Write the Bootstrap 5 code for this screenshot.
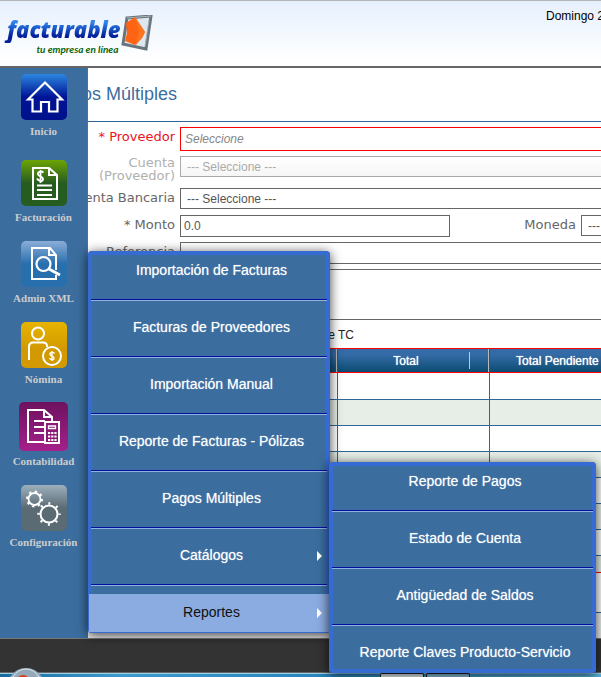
<!DOCTYPE html>
<html lang="es">
<head>
<meta charset="utf-8">
<meta name="viewport" content="width=device-width, initial-scale=1">
<title>Facturable - Pagos</title>
<link href="https://cdn.jsdelivr.net/npm/bootstrap@5.3.0/dist/css/bootstrap.min.css" rel="stylesheet">
<style>
  body { font-family: "Liberation Sans", Arial, sans-serif; font-size: 12px; line-height: 16px; color: #333; overflow: hidden; }
  .app-header { height: 67px; border-top: 1px solid #b4b4bc; border-bottom: 1px solid #666; background: linear-gradient(#e6f0fd, #fff 92%); }
  .brand { padding: 14px 0 0 4px; color: inherit; gap: 1px; }
  .brand-name { padding-left: 3px; font: italic 800 22px/28px "Open Sans", sans-serif; background: linear-gradient(#2f86ee 25%, #04209a 75%); -webkit-background-clip: text; background-clip: text; color: transparent; }
  .brand-tag { font: italic 700 10px/12px Lato, sans-serif; color: #0a650a; text-align: right; padding-right: 2px; }
  .today { width: 55px; padding-top: 7px; color: #000; }
  .app-side { width: 88px; background: #3b6e9f; border-top: 1px solid #666; border-right: 1px solid #55708a; padding-top: 6px; gap: 16px; }
  .app-side a { font: 700 11px/16px "Liberation Serif", serif; color: #ccc; gap: 3px; }
  .app-side .home { margin-bottom: 5px; }
  .app-side svg { width: 46px; height: 46px; }
  .app-side svg.wide { width: 49px; height: 49px; margin: -1px 0; }
  .app-main { min-width: 0; border-top: 1px solid #666; }
  .page-title { font-size: 18px; line-height: 53px; font-weight: 400; color: #3b6e9f; border-bottom: 1px solid #2f6599; }
  .page-title span { margin-left: -6px; }
  .form-area { padding-top: 5px; gap: 5px; }
  .form-line { gap: 5px; min-height: 22px; }
  .form-line label { font: 13px/14px "DejaVu Sans", Verdana, sans-serif; color: #666; text-align: right; padding-top: 3px; }
  .lab { width: 87px; display: flex; justify-content: flex-end; flex-shrink: 0; white-space: nowrap; overflow: hidden; }
  .lab-mid { width: 121px; }
  .form-line .req { color: #e8141c; }
  .form-line .off { color: #b0b0b0; padding-top: 0; line-height: 13px; height: 27px; }
  .fld { appearance: none; border: 1px solid #666; border-radius: 0; height: 21px; padding: 0 6px; background: #fff; color: #555; font-size: 12px; min-width: 0; }
  .fld.open { border-right: 0; }
  .fld.txt { height: 22px; padding: 0 3px; }
  .fld.prov { height: 24px; border-color: #f00; padding: 0 4px; font-style: italic; }
  .fld.prov::placeholder { color: #888; }
  .fld:disabled { border-color: #aaa; color: #aaa; opacity: 1; background: linear-gradient(#fff, #f6f6f6); }
  .fld.area { height: 51px; resize: none; }
  .fld.w-monto { width: 270px; flex-shrink: 0; }
  .fld.cur { padding-right: 0; }
  .tc { width: 266px; line-height: 30px; height: 28px; color: #222; }
  .pay-grid { table-layout: fixed; border-collapse: separate; border-spacing: 0; }
  .pay-grid .c1 { width: 250px; } .pay-grid .c2 { width: 152px; }
  .pay-grid th { height: 25px; border: 1px solid #f00; border-left: 0; background: linear-gradient(#346ba6 25%, #0b4c72) padding-box; color: #fff; font-weight: 400; padding: 0 15px 0 0; text-align: center; position: relative; white-space: nowrap; text-shadow: 0 0 1px #fff; }
  .pay-grid th.split { box-shadow: inset -1px 0 #b8b8b8; }
  .pay-grid th.split::after { content: ""; position: absolute; right: 19px; top: 3px; bottom: 3px; width: 1px; background: #b9cbdc; }
  .pay-grid th:last-child { padding: 0 0 0 26px; text-align: left; border-right: 0; }
  .pay-grid td { height: 26px; padding: 0; border-right: 1px solid #2f6599; border-bottom: 1px solid #2f6599; }
  .pay-grid td:last-child { border-right: 0; }
  .pay-grid tr:nth-child(even) td { background: #e7eee7; }
  .pay-grid tbody tr:first-child td { height: 27px; }
  .pay-grid tbody tr:last-child td { height: 17px; border-bottom-color: #f00; }
  .sum { height: 40px; border-bottom: 1px solid #2f6599; }
  .base { height: 25px; background: #eee; }
  .fly { position: absolute; z-index: 5; list-style: none; margin: 0; padding: 0; background: #3b6e9f; border: 1px solid #366bd2; border-radius: 3px; box-shadow: inset 0 0 0 3px #366bd2, 0 2px 12px rgba(0,0,0,.75); font-size: 14px; }
  .fly a { display: block; height: 38px; line-height: 36px; padding-left: 5px; color: #fff; text-align: center; text-decoration: none; position: relative; text-shadow: 0 0 1px rgba(255,255,255,.6); }
  .fly li + li::before { content: ""; display: block; height: 2px; margin: 9px 2px 8px; background: linear-gradient(#00109c 50%, #8fb2e0 50%); }
  .fly .sel { background: #8aace1; color: #111; text-shadow: none; }
  .fly .more::after { content: ""; position: absolute; right: 7px; top: 14px; border: solid transparent; border-width: 5px 0 5px 5px; border-left-color: #fff; }
  .fly-a { left: 88px; top: 184px; width: 242px; }
  .fly-b { left: 329px; top: 395px; width: 267px; }
  .app-foot { height: 35px; background: #333; border-top: 1px solid #777; border-bottom: 1px solid #666; }
  .dock { height: 4px; background: linear-gradient(#9cd0ea 25%, transparent 25%), linear-gradient(90deg, #176b9b, #3b9ccc 20%, #2584ba 55%, #58b5df); position: relative; padding-left: 380px; gap: 2px; }
  .dock span { width: 44px; border: 1px solid #222; border-bottom: 0; border-radius: 2px 2px 0 0; background: #e8f2f8; }
  .dock span + span { background: #8dc0dc; }
  .dock svg { position: absolute; left: 10px; bottom: 0; }
</style>
<script src="https://cdn.jsdelivr.net/npm/bootstrap@5.3.0/dist/js/bootstrap.bundle.min.js"></script>
</head>
<body>
<div class="d-flex flex-column min-vh-100">
  <header class="app-header d-flex justify-content-between">
    <a href="#" class="brand d-flex text-decoration-none">
      <div>
        <div class="brand-name">facturable</div>
        <div class="brand-tag">tu empresa en línea</div>
      </div>
      <svg width="34" height="38" viewBox="0 0 34 38" aria-hidden="true">
        <path d="M6 3 30 1 25 34 2 29Z" fill="#dde7ee" stroke="#69757c" stroke-width="3"/>
        <path d="M6 3 30 1M28 5 24 31" stroke="#aab5bb" fill="none"/>
        <path d="M5 8 14 2 24 17 21 23 14 30 4 26 6 18Z" fill="#ff6414"/>
        <path d="M14 2 24 17 21 23 15 30 18 17Z" fill="#ff741f"/>
      </svg>
    </a>
    <div class="today text-nowrap overflow-hidden">Domingo 2</div>
  </header>

  <div class="d-flex flex-grow-1 position-relative">
    <nav class="app-side d-flex flex-column flex-shrink-0" aria-label="Principal">
      <svg width="0" height="0" class="position-absolute" aria-hidden="true"><defs>
        <linearGradient id="gBlue" x2="0" y2="1"><stop stop-color="#2b86e0"/><stop offset=".5" stop-color="#001496"/><stop offset="1" stop-color="#00108a"/></linearGradient>
        <linearGradient id="gGreen" x2="0" y2="1"><stop stop-color="#6ca405"/><stop offset=".5" stop-color="#275c20"/></linearGradient>
        <linearGradient id="gSky" x2="0" y2="1"><stop stop-color="#8badd8"/><stop offset=".5" stop-color="#286fae"/></linearGradient>
        <linearGradient id="gGold" x2="0" y2="1"><stop stop-color="#e6b400"/><stop offset=".6" stop-color="#d29900"/></linearGradient>
        <linearGradient id="gPlum" x2="0" y2="1"><stop stop-color="#6d125f"/><stop offset="1" stop-color="#a5208a"/></linearGradient>
        <linearGradient id="gGray" x2="0" y2="1"><stop stop-color="#9cb0bd"/><stop offset=".5" stop-color="#5b6b74"/></linearGradient>
      </defs></svg>
      <a href="#" class="home d-flex flex-column align-items-center text-decoration-none">
        <svg viewBox="0 0 46 46"><rect width="46" height="46" rx="5" fill="url(#gBlue)"/><path d="M7 25.500 24 8.500 41 25.500H36.500V37.500H28V28H20V37.500H11.500V25.500Z" fill="none" stroke="#fff" stroke-width="2.200"/></svg>Inicio</a>
      <a href="#" class="d-flex flex-column align-items-center text-decoration-none">
        <svg viewBox="0 0 46 46"><rect width="46" height="46" rx="5" fill="url(#gGreen)"/><path d="M12 8H28L36 15V39H12ZM28 8V15H36M16 25.500H31M16 30H31M16 35H31" fill="none" stroke="#fff" stroke-width="2"/><path d="M22.500 12.500C20 10.500 16 12 17 14.500S22.500 16.500 22 19.500 17 20.500 16 18.500M19.500 10V23" fill="none" stroke="#fff" stroke-width="1.800"/></svg>Facturación</a>
      <a href="#" class="d-flex flex-column align-items-center text-decoration-none">
        <svg viewBox="0 0 46 46"><rect width="46" height="46" rx="5" fill="url(#gSky)"/><path d="M35 34V38H11V7H29L35 14V29M28 7V14H35" fill="none" stroke="#fff" stroke-width="2"/><circle cx="22.500" cy="23" r="7" fill="none" stroke="#fff" stroke-width="2.200"/><path d="M28 28 39 34" stroke="#fff" stroke-width="3"/></svg>Admin XML</a>
      <a href="#" class="d-flex flex-column align-items-center text-decoration-none">
        <svg viewBox="0 0 46 46"><rect width="46" height="46" rx="5" fill="url(#gGold)"/><g fill="none" stroke="#fff" stroke-width="2"><circle cx="17" cy="11.500" r="6"/><path d="M8 38V25Q8 20.500 12 20.500H22Q26 20.500 26 24V25"/><circle cx="31" cy="34" r="9"/></g><path d="M33.500 31.500C32 29.500 28.500 30.500 29 32.500S33.500 34 33 36.500 29 37.500 28.500 36M31 29V39" fill="none" stroke="#fff" stroke-width="1.300"/></svg>Nómina</a>
      <a href="#" class="d-flex flex-column align-items-center text-decoration-none">
        <svg class="wide" viewBox="0 0 49 49"><rect width="49" height="49" rx="5" fill="url(#gPlum)"/><path d="M25 40H9V8H25L33 15V19M25 8V15H33M15 19H26M15 25H26M15 31H26" fill="none" stroke="#fff" stroke-width="2"/><path d="M26 20H40V41H26Z" fill="#8a1a75" stroke="#fff" stroke-width="2"/><path d="M29.500 24H36.500V26.500H29.500Z" fill="none" stroke="#fff" stroke-width="1.300"/><path d="M29 31H38M29 34.500H38M29 38H38" stroke="#fff" stroke-width="2" stroke-dasharray="2.200 1"/></svg>Contabilidad</a>
      <a href="#" class="d-flex flex-column align-items-center text-decoration-none">
        <svg viewBox="0 0 46 46"><rect width="46" height="46" rx="5" fill="url(#gGray)"/><g fill="none" stroke="#fff"><circle cx="13.500" cy="14" r="6" stroke-width="1.800"/><circle cx="13.500" cy="14" r="7.500" stroke-width="2" stroke-dasharray="2.400 3.490"/><circle cx="28" cy="29" r="8.500" stroke-width="2"/><circle cx="28" cy="29" r="10.500" stroke-width="2.500" stroke-dasharray="2 6.247" stroke-dashoffset="1"/></g></svg>Configuración</a>
    </nav>

    <main class="app-main flex-grow-1 d-flex flex-column">
      <h1 class="page-title m-0 overflow-hidden text-nowrap"><span>os Múltiples</span></h1>
      <form class="form-area d-flex flex-column">
        <div class="form-line d-flex"><label class="lab req" for="prov">* Proveedor</label><input id="prov" class="fld prov open flex-grow-1" placeholder="Seleccione"></div>
        <div class="form-line d-flex"><label class="lab off d-block text-wrap" for="cta">Cuenta (Proveedor)</label><select id="cta" class="fld open flex-grow-1" disabled><option>--- Seleccione ---</option></select></div>
        <div class="form-line d-flex"><label class="lab" for="ban">enta Bancaria</label><select id="ban" class="fld open flex-grow-1"><option>--- Seleccione ---</option></select></div>
        <div class="form-line d-flex"><label class="lab" for="mon">* Monto</label><input id="mon" class="fld txt w-monto" value="0.0"><label class="lab lab-mid" for="cur">Moneda</label><select id="cur" class="fld open cur flex-grow-1"><option>---</option></select></div>
        <div class="form-line d-flex"><label class="lab" for="ref">Referencia</label><input id="ref" class="fld txt open flex-grow-1"></div>
        <div class="form-line d-flex"><span class="lab"></span><textarea class="fld area open flex-grow-1" aria-label="Notas"></textarea></div>
      </form>
      <div class="tc text-end">e TC</div>
      <table class="pay-grid w-100">
        <colgroup><col class="c1"><col class="c2"><col></colgroup>
        <thead><tr><th class="split"></th><th class="split">Total</th><th>Total Pendiente</th></tr></thead>
        <tbody>
          <tr><td></td><td></td><td></td></tr><tr><td></td><td></td><td></td></tr>
          <tr><td></td><td></td><td></td></tr><tr><td></td><td></td><td></td></tr>
          <tr><td></td><td></td><td></td></tr><tr><td></td><td></td><td></td></tr>
          <tr><td></td><td></td><td></td></tr><tr><td></td><td></td><td></td></tr>
        </tbody>
      </table>
      <div class="sum"></div>
      <div class="base flex-grow-1"></div>
    </main>

    <ul class="fly fly-a">
      <li><a href="#">Importación de Facturas</a></li>
      <li><a href="#">Facturas de Proveedores</a></li>
      <li><a href="#">Importación Manual</a></li>
      <li><a href="#">Reporte de Facturas - Pólizas</a></li>
      <li><a href="#">Pagos Múltiples</a></li>
      <li><a href="#" class="more">Catálogos</a></li>
      <li><a href="#" class="more sel">Reportes</a></li>
    </ul>
    <ul class="fly fly-b">
      <li><a href="#">Reporte de Pagos</a></li>
      <li><a href="#">Estado de Cuenta</a></li>
      <li><a href="#">Antigüedad de Saldos</a></li>
      <li><a href="#">Reporte Claves Producto-Servicio</a></li>
    </ul>
  </div>

  <footer class="app-foot"></footer>
  <div class="dock d-flex"><svg width="32" height="9" viewBox="0 0 32 9" aria-hidden="true"><path d="M0 9Q6 0 16 0T32 9Z" fill="#93a9b8"/><path d="M3 9Q8 1 16 1T29 9" fill="none" stroke="#dce6ec"/><path d="M8 9Q13 5 18 9Z" fill="#d8401c"/></svg><span></span><span></span></div>
</div>
</body>
</html>
